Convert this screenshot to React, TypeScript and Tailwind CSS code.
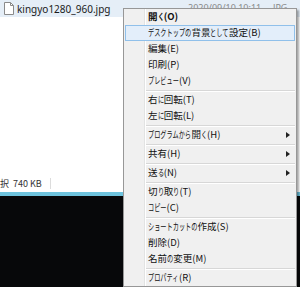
import React from "react";

type Item =
  | { type: "sep" }
  | { type: "item"; label: string; bold?: boolean; hover?: boolean; sub?: boolean };

const items: Item[] = [
  { type: "item", label: "開く(O)", bold: true },
  { type: "item", label: "デスクトップの背景として設定(B)", hover: true },
  { type: "item", label: "編集(E)" },
  { type: "item", label: "印刷(P)" },
  { type: "item", label: "プレビュー(V)" },
  { type: "sep" },
  { type: "item", label: "右に回転(T)" },
  { type: "item", label: "左に回転(L)" },
  { type: "sep" },
  { type: "item", label: "プログラムから開く(H)", sub: true },
  { type: "sep" },
  { type: "item", label: "共有(H)", sub: true },
  { type: "sep" },
  { type: "item", label: "送る(N)", sub: true },
  { type: "sep" },
  { type: "item", label: "切り取り(T)" },
  { type: "item", label: "コピー(C)" },
  { type: "sep" },
  { type: "item", label: "ショートカットの作成(S)" },
  { type: "item", label: "削除(D)" },
  { type: "item", label: "名前の変更(M)" },
  { type: "sep" },
  { type: "item", label: "プロパティ(R)" },
];

const KANA_W = 6.2;

function JP({ text }: { text: string }) {
  const runs: { kana: boolean; s: string }[] = [];
  for (const ch of text) {
    const kana = /[\u3040-\u30ff]/.test(ch);
    const last = runs[runs.length - 1];
    if (last && last.kana === kana) last.s += ch;
    else runs.push({ kana, s: ch });
  }
  return (
    <>
      {runs.map((r, i) =>
        r.kana ? (
          <span key={i} className="inline-block whitespace-nowrap" style={{ width: [...r.s].length * KANA_W }}>
            <span className="inline-block origin-left scale-x-[0.65]">{r.s}</span>
          </span>
        ) : (
          <span key={i}>{r.s}</span>
        )
      )}
    </>
  );
}

function FileIcon() {
  return (
    <svg width="10" height="13" viewBox="0 0 10 13" className="shrink-0">
      <path d="M0.5 0.5 H6.5 L9.5 3.5 V12.5 H0.5 Z" fill="#ffffff" stroke="#8a8a8a" strokeWidth="1" />
      <path d="M6.5 0.5 V3.5 H9.5" fill="none" stroke="#8a8a8a" strokeWidth="1" />
    </svg>
  );
}

export default function App() {
  return (
    <div
      className="relative w-[300px] h-[287px] overflow-hidden bg-white flex flex-col"
      style={{ fontFamily: "'Noto Sans', 'Noto Sans CJK JP', sans-serif" }}
    >
      <div className="h-[17px] bg-[#e5eef7] flex items-center text-[10px] text-[#1a1a1a] whitespace-nowrap">
        <div className="w-[188px] shrink-0 flex items-center pl-[4px]">
          <FileIcon />
          <span className="ml-[3px] leading-none">kingyo1280_960.jpg</span>
        </div>
        <span className="shrink-0 leading-none text-[9px] text-[#8a8a8a] mt-[-3px]">
          2020/09/10 10:11&nbsp;&nbsp;&nbsp;&nbsp;&nbsp;JPG
        </span>
      </div>
      <div className="flex-1 bg-white" />
      <div className="h-[17px] bg-white flex items-center text-[9px] text-[#333]">
        <span className="leading-none" style={{ fontFamily: "'Noto Sans CJK JP', sans-serif" }}>
          択&nbsp;&nbsp;740 KB
        </span>
        <span className="ml-[8px] w-px h-[11px] bg-[#dcdcdc]" />
      </div>
      <div className="h-[4px] bg-[#6ec3de]" />
      <div className="h-[91px] bg-[#07080a]" />

      <div
        className="absolute left-[123px] top-[8px] w-[174px] border border-[#979797] bg-[#f0f0f0] shadow-[2px_2px_2px_rgba(0,0,0,0.35)] text-[9.5px] text-[#111]"
        style={{ fontFamily: "'Noto Sans CJK JP', sans-serif" }}
      >
        <div className="absolute left-[20px] top-0 bottom-0 w-px bg-[#e2e3e3]" />
        <div className="absolute left-[21px] top-0 bottom-0 w-px bg-white" />
        <div className="relative flex flex-col">
          {items.map((it, i) =>
            it.type === "sep" ? (
              <div key={i} className="h-[3px] pt-[1px] ml-[22px] mr-[1px]">
                <div className="h-px bg-[#d7d7d7]" />
                <div className="h-px bg-white" />
              </div>
            ) : (
              <div key={i} className="px-[1px]">
                <div
                  className={
                    "h-[16px] flex items-center pl-[22px] pr-[3px] border whitespace-nowrap " +
                    (it.hover ? "border-[#90c0ea] bg-[#e3eefa]" : "border-transparent")
                  }
                >
                  <span className={"leading-none " + (it.bold ? "font-bold" : "")}>
                    <JP text={it.label} />
                  </span>
                  {it.sub && (
                    <svg width="4" height="6" viewBox="0 0 4 6" className="ml-auto mr-[1px]">
                      <path d="M0 0 L4 3 L0 6 Z" fill="#222" />
                    </svg>
                  )}
                </div>
              </div>
            )
          )}
        </div>
      </div>
    </div>
  );
}
